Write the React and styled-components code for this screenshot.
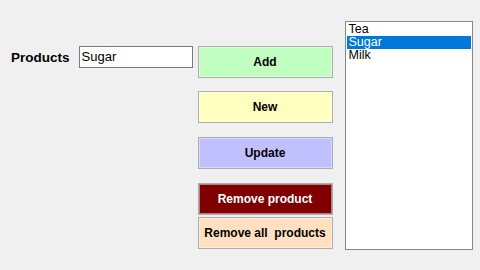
import styled, { createGlobalStyle } from "styled-components";

const Global = createGlobalStyle`
  html, body {
    margin: 0;
    padding: 0;
    background: #f0f0f0;
  }
  body {
    font-family: "Liberation Sans", Arial, sans-serif;
    width: 480px;
    height: 270px;
    overflow: hidden;
  }
`;

const Form = styled.div`
  display: flex;
  align-items: flex-start;
  width: 480px;
  height: 270px;
  background: #f0f0f0;
`;

const Field = styled.div`
  display: flex;
  align-items: center;
  gap: 9px;
  margin: 46px 0 0 11px;
`;

const Label = styled.span`
  flex: 0 0 58px;
  font-size: 13.5px;
  font-weight: bold;
  color: #000;
  white-space: nowrap;
`;

const TextBox = styled.div`
  box-sizing: border-box;
  flex: 0 0 114px;
  height: 22px;
  padding: 2px 0 0 2px;
  background: #fff;
  border: 1px solid #7a7a7a;
  font-size: 13px;
  color: #000;
`;

const Buttons = styled.div`
  display: flex;
  flex-direction: column;
  margin: 46px 0 0 5px;
  width: 135px;
`;

const Button = styled.div`
  box-sizing: border-box;
  height: 32px;
  margin-top: ${({ $gap }) => $gap || 0}px;
  display: flex;
  align-items: center;
  justify-content: center;
  background: ${({ $bg }) => $bg};
  color: ${({ $fg }) => $fg || "#000"};
  border: 1px solid #adadad;
  box-shadow: inset 0 0 0 1px ${({ $inner }) => $inner || "rgba(255,255,255,0.4)"};
  font-size: 12px;
  font-weight: bold;
  white-space: pre;
`;

const ListBox = styled.div`
  box-sizing: border-box;
  width: 128px;
  height: 229px;
  margin: 21px 0 0 12px;
  padding: 1px;
  background: #fff;
  border: 1px solid #828790;
  font-size: 12.5px;
`;

const Item = styled.div`
  height: 13px;
  line-height: 13px;
  padding-left: 2px;
  background: ${({ $selected }) => ($selected ? "#0078d7" : "transparent")};
  color: ${({ $selected }) => ($selected ? "#fff" : "#000")};
`;

const buttons = [
  { label: "Add", bg: "#c0ffc0", gap: 0 },
  { label: "New", bg: "#ffffc0", gap: 13 },
  { label: "Update", bg: "#c0c0ff", gap: 14 },
  { label: "Remove product", bg: "#800000", fg: "#fff", inner: "#b08080", gap: 14 },
  { label: "Remove all  products", bg: "#ffe0c0", gap: 2 },
];

const products = ["Tea", "Sugar", "Milk"];

export default function App() {
  return (
    <>
      <Global />
      <Form>
        <Field>
          <Label>Products</Label>
          <TextBox>Sugar</TextBox>
        </Field>
        <Buttons>
          {buttons.map((b) => (
            <Button key={b.label} $bg={b.bg} $fg={b.fg} $inner={b.inner} $gap={b.gap}>
              {b.label}
            </Button>
          ))}
        </Buttons>
        <ListBox>
          {products.map((p) => (
            <Item key={p} $selected={p === "Sugar"}>
              {p}
            </Item>
          ))}
        </ListBox>
      </Form>
    </>
  );
}
